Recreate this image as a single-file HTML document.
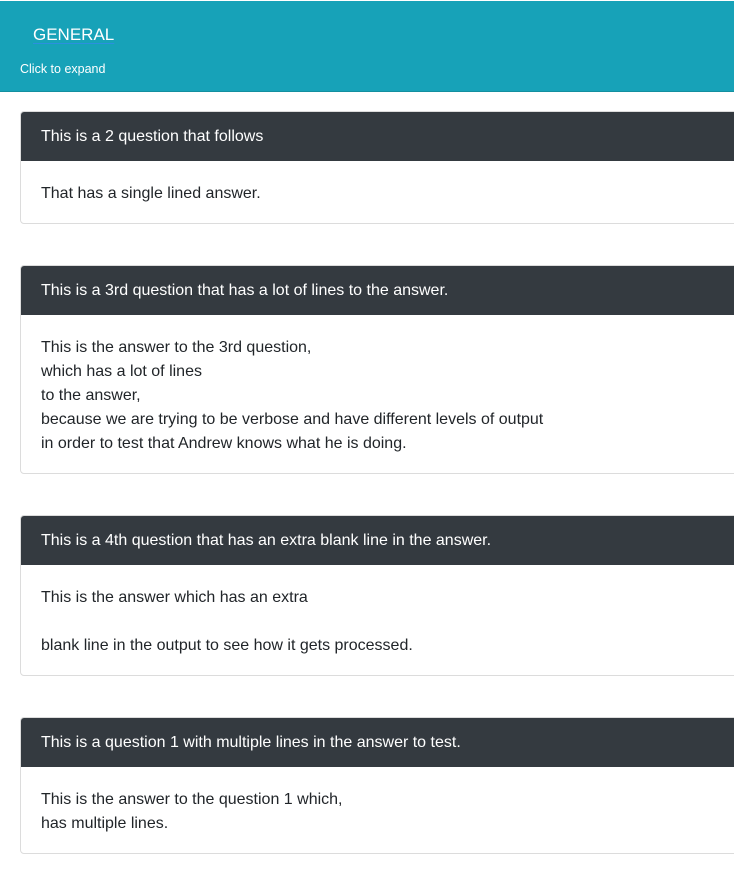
<!DOCTYPE html>
<html><head><style>
body{margin:0;width:734px;height:871px;overflow:hidden;background:#fff;font-family:"Liberation Sans",sans-serif;color:#212529;}
.top{position:absolute;left:0;top:1px;width:734px;height:90px;background:#17a2b8;color:#fff;border-bottom:1px solid #138f9f;}
.top .t{position:absolute;left:33px;top:24px;font-size:17px;text-decoration:underline;text-decoration-color:#2b8fe0;text-underline-offset:3px;}
.top .s{position:absolute;left:20px;top:61px;font-size:12.5px;}
.card{position:absolute;left:20px;width:730px;border:1px solid #dcdcdc;border-radius:4px;overflow:hidden;}
.h{background:#343a40;color:#fff;height:49px;line-height:48px;padding-left:20px;padding-top:1px;box-sizing:border-box;font-size:16px;}
.b{padding:21px 20px 17px;font-size:16px;line-height:24px;}
</style></head><body>
<div class="top"><div class="t">GENERAL</div><div class="s">Click to expand</div></div>
<div class="card" style="top:111px"><div class="h">This is a 2 question that follows</div><div class="b">That has a single lined answer.</div></div>
<div class="card" style="top:265px"><div class="h">This is a 3rd question that has a lot of lines to the answer.</div><div class="b">This is the answer to the 3rd question,<br>which has a lot of lines<br>to the answer,<br>because we are trying to be verbose and have different levels of output<br>in order to test that Andrew knows what he is doing.</div></div>
<div class="card" style="top:515px"><div class="h">This is a 4th question that has an extra blank line in the answer.</div><div class="b">This is the answer which has an extra<br><br>blank line in the output to see how it gets processed.</div></div>
<div class="card" style="top:717px"><div class="h">This is a question 1 with multiple lines in the answer to test.</div><div class="b">This is the answer to the question 1 which,<br>has multiple lines.</div></div>
</body></html>
